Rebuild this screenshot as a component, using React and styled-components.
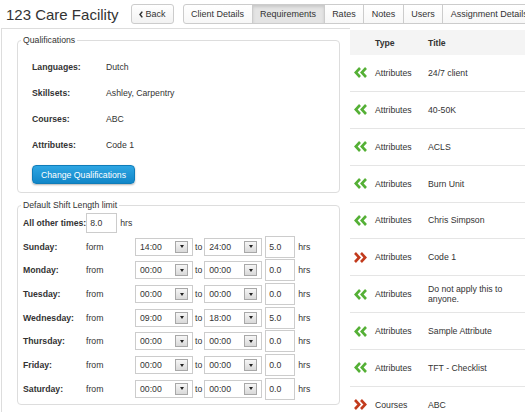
import React from "react";
import styled, { createGlobalStyle } from "styled-components";

const Global = createGlobalStyle`
  html, body { margin: 0; padding: 0; background: #fff; overflow: hidden; }
  body {
    font-family: "Liberation Sans", Arial, sans-serif;
    font-size: 8.7px;
    color: #333;
  }
  * { box-sizing: border-box; }
`;

const Header = styled.div`
  display: flex;
  align-items: center;
  height: 28px;
  padding-left: 6px;
  white-space: nowrap;
`;

const Title = styled.h1`
  margin: 0 12px 0 0;
  font-size: 15px;
  font-weight: normal;
  line-height: 1;
  color: #333;
`;

const Btn = styled.button`
  display: inline-flex;
  align-items: center;
  gap: 3px;
  height: 20px;
  padding: 0 7px;
  border: 1px solid #ccc;
  border-radius: 3px;
  background: linear-gradient(#ffffff, #f2f2f2);
  font-family: inherit;
  font-size: 9px;
  color: #333;
  margin-right: 9px;
`;

const TabGroup = styled.div`
  display: flex;
`;

const Tab = styled.div`
  display: flex;
  align-items: center;
  height: 20px;
  padding: 0 7.5px;
  border: 1px solid #ccc;
  margin-left: -1px;
  font-size: 9px;
  color: #333;
  background: ${(p) => (p.$active ? "#e4e4e4" : "linear-gradient(#ffffff, #f7f7f7)")};
  box-shadow: ${(p) => (p.$active ? "inset 0 2px 3px rgba(0,0,0,0.12)" : "none")};
  &:first-child { margin-left: 0; border-radius: 3px 0 0 3px; }
`;

const Main = styled.div`
  display: flex;
  align-items: flex-start;
`;

const LeftPane = styled.div`
  width: 349px;
  margin-left: 1px;
  flex-shrink: 0;
  border-left: 1px solid #ddd;
  border-top: 1px solid #ddd;
  padding: 6px 10px 20px 15px;
`;

const Fieldset = styled.fieldset`
  width: 323px;
  margin: ${(p) => (p.$first ? "0" : "7px 0 0 0")};
  padding: 0 0 0 3px;
  border: 1px solid #ddd;
  border-radius: 4px;
  min-width: 0;
`;

const Legend = styled.legend`
  padding: 0 2px;
  font-size: 8.7px;
  line-height: 10px;
  color: #333;
`;

const QualBody = styled.div`
  padding: 9px 0 8px 11px;
`;

const QualRow = styled.div`
  display: grid;
  grid-template-columns: 74px 1fr;
  align-items: center;
  height: 26px;
`;

const Label = styled.span`
  font-weight: bold;
  color: #333;
  white-space: nowrap;
`;

const PrimaryBtn = styled.button`
  margin-top: 7px;
  height: 19px;
  padding: 0 8px;
  border: 1px solid #0f7cb9;
  border-radius: 4px;
  background: linear-gradient(#2ea6e3, #1186c8);
  box-shadow: 0 1px 2px rgba(0, 0, 0, 0.3);
  color: #fff;
  font-family: inherit;
  font-size: 8.7px;
`;

const ShiftBody = styled.div`
  padding: 3px 0 3px 2px;
`;

const AllRow = styled.div`
  display: flex;
  align-items: center;
  height: 20px;
  margin-bottom: 2px;
`;

const AllLabel = styled(Label)`
  margin-right: 0;
`;

const DayRow = styled.div`
  display: flex;
  align-items: center;
  height: 23.67px;
`;

const DayLabel = styled(Label)`
  width: 63px;
  flex-shrink: 0;
`;

const FromText = styled.span`
  width: 49px;
  flex-shrink: 0;
`;

const ToText = styled.span`
  margin: 0 2px;
  flex-shrink: 0;
`;

const SelectBox = styled.div`
  position: relative;
  display: flex;
  align-items: center;
  width: 58px;
  height: 18px;
  padding-left: 4px;
  border: 1px solid #ccc;
  background: #fff;
  flex-shrink: 0;
`;

const SelectArrow = styled.span`
  position: absolute;
  right: 4px;
  top: 2px;
  width: 13px;
  height: 12px;
  border: 1px solid #a8a8a8;
  background: linear-gradient(#f6f6f6, #d9d9d9);
  display: flex;
  align-items: center;
  justify-content: center;
  &::after {
    content: "";
    border-left: 2.5px solid transparent;
    border-right: 2.5px solid transparent;
    border-top: 3px solid #222;
  }
`;

const NumInput = styled.div`
  display: flex;
  align-items: center;
  width: ${(p) => p.$w}px;
  height: ${(p) => p.$h}px;
  padding-left: 3px;
  border: 1px solid #ccc;
  background: #fff;
  flex-shrink: 0;
  margin-left: ${(p) => p.$ml || 0}px;
`;

const Hrs = styled.span`
  margin-left: 3px;
`;

const RightPane = styled.div`
  flex: 1;
  margin-top: 2px;
  min-width: 0;
`;

const THead = styled.div`
  display: flex;
  align-items: center;
  height: 25px;
  background: #f4f4f4;
  font-weight: bold;
`;

const TRow = styled.div`
  display: flex;
  align-items: center;
  height: 36.875px;
  border-bottom: 1px solid #e5e5e5;
`;

const IconCell = styled.div`
  width: 25px;
  padding-left: 4px;
  display: flex;
  align-items: center;
  flex-shrink: 0;
`;

const TypeCell = styled.div`
  width: 53px;
  flex-shrink: 0;
`;

const TitleCell = styled.div`
  width: 82px;
  line-height: 10px;
`;

const Chevron = ({ dir }) =>
  dir === "left" ? (
    <svg width="13" height="11" viewBox="0 0 13 11">
      <polyline points="6,1 1.8,5.5 6,10" fill="none" stroke="#55b036" strokeWidth="2.6" />
      <polyline points="12,1 7.8,5.5 12,10" fill="none" stroke="#55b036" strokeWidth="2.6" />
    </svg>
  ) : (
    <svg width="13" height="11" viewBox="0 0 13 11">
      <polyline points="1,1 5.2,5.5 1,10" fill="none" stroke="#c23b1d" strokeWidth="2.6" />
      <polyline points="7,1 11.2,5.5 7,10" fill="none" stroke="#c23b1d" strokeWidth="2.6" />
    </svg>
  );

const quals = [
  ["Languages:", "Dutch"],
  ["Skillsets:", "Ashley, Carpentry"],
  ["Courses:", "ABC"],
  ["Attributes:", "Code 1"],
];

const days = [
  ["Sunday:", "form", "14:00", "24:00", "5.0"],
  ["Monday:", "from", "00:00", "00:00", "0.0"],
  ["Tuesday:", "from", "00:00", "00:00", "0.0"],
  ["Wednesday:", "from", "09:00", "18:00", "5.0"],
  ["Thursday:", "from", "00:00", "00:00", "0.0"],
  ["Friday:", "from", "00:00", "00:00", "0.0"],
  ["Saturday:", "from", "00:00", "00:00", "0.0"],
];

const rows = [
  ["left", "Attributes", "24/7 client"],
  ["left", "Attributes", "40-50K"],
  ["left", "Attributes", "ACLS"],
  ["left", "Attributes", "Burn Unit"],
  ["left", "Attributes", "Chris Simpson"],
  ["right", "Attributes", "Code 1"],
  ["left", "Attributes", "Do not apply this to anyone."],
  ["left", "Attributes", "Sample Attribute"],
  ["left", "Attributes", "TFT - Checklist"],
  ["right", "Courses", "ABC"],
];

export default function App() {
  return (
    <>
      <Global />
      <Header>
        <Title>123 Care Facility</Title>
        <Btn>
          <svg width="4" height="7" viewBox="0 0 4 7">
            <polyline points="3.3,0.6 1,3.5 3.3,6.4" fill="none" stroke="#333" strokeWidth="1.5" />
          </svg>
          Back
        </Btn>
        <TabGroup>
          <Tab>Client Details</Tab>
          <Tab $active>Requirements</Tab>
          <Tab>Rates</Tab>
          <Tab>Notes</Tab>
          <Tab>Users</Tab>
          <Tab>Assignment Details</Tab>
        </TabGroup>
      </Header>
      <Main>
        <LeftPane>
          <Fieldset $first>
            <Legend>Qualifications</Legend>
            <QualBody>
              {quals.map(([l, v]) => (
                <QualRow key={l}>
                  <Label>{l}</Label>
                  <span>{v}</span>
                </QualRow>
              ))}
              <PrimaryBtn>Change Qualifications</PrimaryBtn>
            </QualBody>
          </Fieldset>
          <Fieldset>
            <Legend>Default Shift Length limit</Legend>
            <ShiftBody>
              <AllRow>
                <AllLabel>All other times:</AllLabel>
                <NumInput $w={31} $h={20}>8.0</NumInput>
                <Hrs>hrs</Hrs>
              </AllRow>
              {days.map(([d, f, a, b, h]) => (
                <DayRow key={d}>
                  <DayLabel>{d}</DayLabel>
                  <FromText>{f}</FromText>
                  <SelectBox>
                    {a}
                    <SelectArrow />
                  </SelectBox>
                  <ToText>to</ToText>
                  <SelectBox>
                    {b}
                    <SelectArrow />
                  </SelectBox>
                  <NumInput $w={30} $h={22} $ml={3}>{h}</NumInput>
                  <Hrs>hrs</Hrs>
                </DayRow>
              ))}
            </ShiftBody>
          </Fieldset>
        </LeftPane>
        <RightPane>
          <THead>
            <IconCell />
            <TypeCell>Type</TypeCell>
            <TitleCell>Title</TitleCell>
          </THead>
          {rows.map(([dir, t, title], i) => (
            <TRow key={i}>
              <IconCell>
                <Chevron dir={dir} />
              </IconCell>
              <TypeCell>{t}</TypeCell>
              <TitleCell>{title}</TitleCell>
            </TRow>
          ))}
        </RightPane>
      </Main>
    </>
  );
}
